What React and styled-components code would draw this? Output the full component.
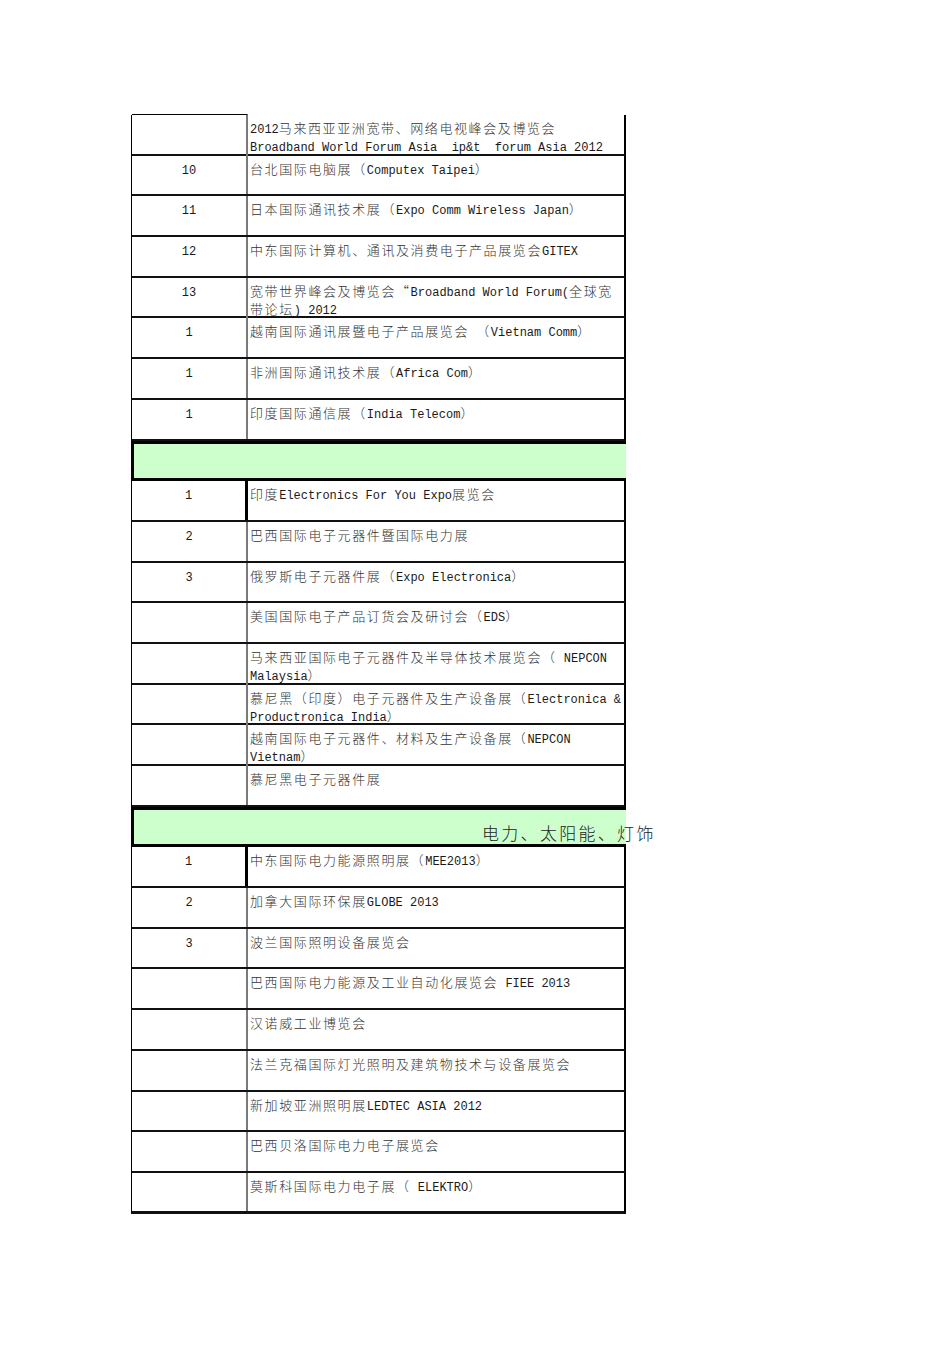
import React from "react";
import styled, { createGlobalStyle } from "styled-components";

const GlobalStyle = createGlobalStyle`
  body {
    margin: 0;
    background: #ffffff;
    font-family: "Liberation Mono", "Noto Sans CJK SC", monospace;
    color: #1a1a1a;
  }
`;

const ROW_H = 40.7;

const Page = styled.div`
  width: 950px;
  height: 1345px;
  padding: 115px 0 0 131px;
  box-sizing: border-box;
`;

const Sheet = styled.div`
  width: 495px;
  display: flex;
  flex-direction: column;
`;

const Row = styled.div`
  display: grid;
  grid-template-columns: 116px 1fr;
  height: ${ROW_H}px;
  box-sizing: border-box;
  border-left: 1px solid #000;
  border-right: 2px solid #000;
  border-bottom: ${(p) => (p.$last ? "3px" : "2px")} solid #111;
`;

const NumCell = styled.div`
  box-sizing: border-box;
  text-align: center;
  font-size: 12px;
  line-height: 18px;
  padding-top: 6px;
  border-right: ${(p) => (p.$strong ? "3px solid #000" : "2px solid #7a7a7a")};
  border-top: ${(p) => (p.$top ? "1px solid #000" : "0")};
  margin-top: ${(p) => (p.$top ? "-1px" : "0")};
`;

const TextCell = styled.div`
  box-sizing: border-box;
  font-size: 12px;
  line-height: 18px;
  padding: 6px 0 0 2px;
  white-space: pre-wrap;
  overflow: visible;
`;

const Han = styled.span`
  font-family: "Noto Sans CJK SC", sans-serif;
  font-size: 13px;
  font-weight: 300;
  line-height: 12px;
  letter-spacing: 1.6px;
  color: #333;
`;

const Band = styled.div`
  height: ${ROW_H}px;
  box-sizing: border-box;
  background: #ccffcc;
  border: 3px solid #000;
  border-right: 0;
  display: flex;
  align-items: flex-start;
  padding: 14px 0 0 348px;
  overflow: visible;
`;

const BandTitle = styled.span`
  font-family: "Noto Sans CJK SC", sans-serif;
  font-size: 17px;
  font-weight: 300;
  letter-spacing: 2.3px;
  line-height: 18px;
  white-space: nowrap;
  color: #222;
`;

const CJK = /([\u2E80-\u9FFF\u3000-\u303F\uFF00-\uFFEF\u201C\u201D]+)/;

const Mixed = ({ text }) =>
  text.split(CJK).map((part, i) =>
    CJK.test(part) ? <Han key={i}>{part}</Han> : <React.Fragment key={i}>{part}</React.Fragment>
  );

const sections = [
  {
    band: null,
    rows: [
      ["", ["2012马来西亚亚洲宽带、网络电视峰会及博览会", "Broadband World Forum Asia  ip&t  forum Asia 2012"]],
      ["10", "台北国际电脑展（Computex Taipei）"],
      ["11", "日本国际通讯技术展（Expo Comm Wireless Japan）"],
      ["12", "中东国际计算机、通讯及消费电子产品展览会GITEX"],
      ["13", "宽带世界峰会及博览会“Broadband World Forum(全球宽带论坛) 2012"],
      ["1", "越南国际通讯展暨电子产品展览会 （Vietnam Comm）"],
      ["1", "非洲国际通讯技术展（Africa Com）"],
      ["1", "印度国际通信展（India Telecom）"],
    ],
  },
  {
    band: "",
    rows: [
      ["1", "印度Electronics For You Expo展览会"],
      ["2", "巴西国际电子元器件暨国际电力展"],
      ["3", "俄罗斯电子元器件展（Expo Electronica）"],
      ["", "美国国际电子产品订货会及研讨会（EDS）"],
      ["", "马来西亚国际电子元器件及半导体技术展览会（ NEPCON Malaysia）"],
      ["", "慕尼黑（印度）电子元器件及生产设备展（Electronica & Productronica India）"],
      ["", "越南国际电子元器件、材料及生产设备展（NEPCON Vietnam）"],
      ["", "慕尼黑电子元器件展"],
    ],
  },
  {
    band: "电力、太阳能、灯饰",
    rows: [
      ["1", "中东国际电力能源照明展（MEE2013）"],
      ["2", "加拿大国际环保展GLOBE 2013"],
      ["3", "波兰国际照明设备展览会"],
      ["", "巴西国际电力能源及工业自动化展览会 FIEE 2013"],
      ["", "汉诺威工业博览会"],
      ["", "法兰克福国际灯光照明及建筑物技术与设备展览会"],
      ["", "新加坡亚洲照明展LEDTEC ASIA 2012"],
      ["", "巴西贝洛国际电力电子展览会"],
      ["", "莫斯科国际电力电子展（ ELEKTRO）"],
    ],
  },
];

export default function App() {
  return (
    <Page>
      <GlobalStyle />
      <Sheet>
        {sections.map((sec, si) => (
          <React.Fragment key={si}>
            {sec.band !== null && (
              <Band>
                <BandTitle>{sec.band}</BandTitle>
              </Band>
            )}
            {sec.rows.map(([num, text], ri) => {
              const lines = Array.isArray(text) ? text : [text];
              const last = si === sections.length - 1 && ri === sec.rows.length - 1;
              return (
                <Row key={ri} $last={last}>
                  <NumCell $strong={sec.band !== null && ri === 0} $top={si === 0 && ri === 0}>
                    {num}
                  </NumCell>
                  <TextCell>
                    {lines.map((l, li) => (
                      <React.Fragment key={li}>
                        {li > 0 && <br />}
                        <Mixed text={l} />
                      </React.Fragment>
                    ))}
                  </TextCell>
                </Row>
              );
            })}
          </React.Fragment>
        ))}
      </Sheet>
    </Page>
  );
}
